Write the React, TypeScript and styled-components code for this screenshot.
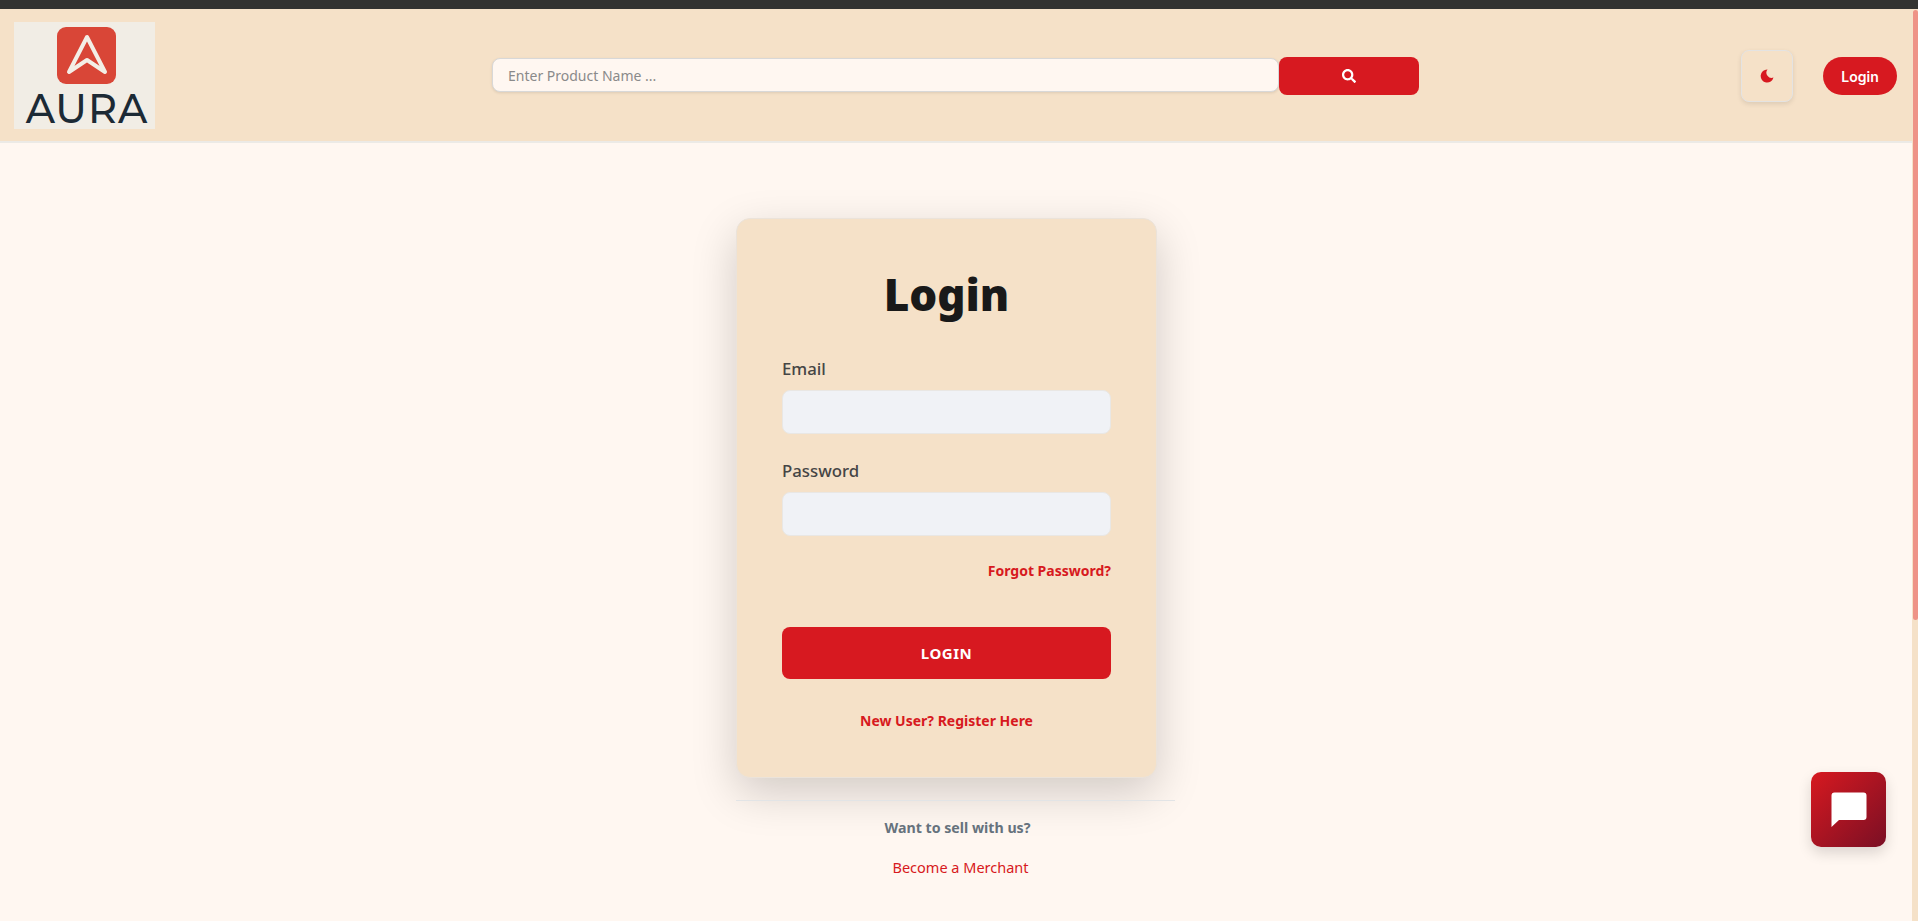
import React from "react";
import styled, { createGlobalStyle } from "styled-components";
import { FaSearch } from "react-icons/fa";

const UI_FONT = `"Noto Sans", "Open Sans", "Liberation Sans", sans-serif`;

const App = () => {
  return (
    <>
      <GlobalStyle />
      <StyledBrowserStrip />
      <StyledViewport>
        <StyledPage>
          <StyledHeader>
            <StyledLogo>
              <svg width="141" height="107" viewBox="0 0 141 107">
                <rect x="43" y="5" width="59" height="57" rx="9" fill="#d94637" />
                <path
                  d="M73 15 L55 50 L73 38 L91 50 Z"
                  fill="none"
                  stroke="#f3eee6"
                  strokeWidth="4"
                  strokeLinejoin="round"
                />
              </svg>
              <StyledLogoText>AURA</StyledLogoText>
            </StyledLogo>
            <StyledSearch>
              <StyledSearchInput placeholder="Enter Product Name ..." />
              <StyledSearchButton>
                <FaSearch size={14} />
              </StyledSearchButton>
            </StyledSearch>
            <StyledActions>
              <StyledThemeButton>
                <svg width="14" height="14" viewBox="0 0 14 14">
                  <path
                    d="M7.5 .5 A6.5 6.5 0 1 0 13.5 8.5 A5.2 5.2 0 0 1 7.5 .5 Z"
                    fill="currentColor"
                  />
                </svg>
              </StyledThemeButton>
              <StyledLoginPill>Login</StyledLoginPill>
            </StyledActions>
          </StyledHeader>

          <StyledMain>
            <StyledCard>
              <StyledTitle>Login</StyledTitle>
              <StyledField>
                <StyledLabel>Email</StyledLabel>
                <StyledInput type="email" />
              </StyledField>
              <StyledField>
                <StyledLabel>Password</StyledLabel>
                <StyledInput type="password" />
              </StyledField>
              <StyledForgot>Forgot Password?</StyledForgot>
              <StyledSubmit>LOGIN</StyledSubmit>
              <StyledRegister>New User? Register Here</StyledRegister>
            </StyledCard>
            <StyledMerchant>
              <StyledSellText>Want to sell with us?</StyledSellText>
              <StyledMerchantLink>Become a Merchant</StyledMerchantLink>
            </StyledMerchant>
          </StyledMain>

          <StyledChatButton>
            <svg width="36" height="36" viewBox="0 0 36 36">
              <path
                d="M3.5 .5 H32.5 A3 3 0 0 1 35.5 3.5 V25 A3 3 0 0 1 32.5 28 H8 L.5 35 V3.5 A3 3 0 0 1 3.5 .5 Z"
                fill="#fff"
              />
            </svg>
          </StyledChatButton>
        </StyledPage>
        <StyledScrollTrack>
          <StyledScrollThumb />
        </StyledScrollTrack>
      </StyledViewport>
    </>
  );
};

export default App;

const GlobalStyle = createGlobalStyle`
  html, body {
    margin: 0;
    height: 921px;
    overflow: hidden;
    background: #fff7f1;
    font-family: ${UI_FONT};
  }
  * { box-sizing: border-box; }
`;

const StyledBrowserStrip = styled.div`
  height: 9px;
  background: #333331;
`;

const StyledViewport = styled.div`
  display: flex;
  height: 912px;
`;

const StyledPage = styled.div`
  position: relative;
  flex: 1;
  display: flex;
  flex-direction: column;
  background: #fff7f1;
`;

const StyledScrollTrack = styled.div`
  width: 6px;
  background: #f5e1c8;
`;

const StyledScrollThumb = styled.div`
  width: 5px;
  height: 610px;
  margin: 1px 0 0 1px;
  background: #ee9387;
  border-radius: 3px;
`;

const StyledHeader = styled.header`
  height: 134px;
  padding: 13px 15px 0 14px;
  display: flex;
  background: #f5e1c8;
  border-bottom: 2px solid #eceae6;
`;

const StyledLogo = styled.div`
  position: relative;
  width: 141px;
  height: 107px;
  background: #f1ede5;
`;

const StyledLogoText = styled.span`
  position: absolute;
  left: 5px;
  right: 0;
  bottom: -5px;
  text-align: center;
  font-family: "Montserrat", "Lato", "Noto Sans", sans-serif;
  font-size: 40px;
  font-weight: 500;
  line-height: 50px;
  letter-spacing: 1px;
  color: #1c2a35;
`;

const StyledSearch = styled.div`
  display: flex;
  align-items: flex-start;
  width: 927px;
  height: 38px;
  margin: 35px 0 0 337px;
`;

const StyledSearchInput = styled.input`
  flex: 1;
  height: 34px;
  margin-top: 1px;
  padding: 0 15px;
  background: #fff7f1;
  border: 1px solid #d8d8d8;
  border-radius: 8px;
  box-shadow: 0 1px 3px rgba(0, 0, 0, 0.1);
  font-family: ${UI_FONT};
  font-size: 14px;
  outline: none;

  &::placeholder {
    color: #8a8a8a;
  }
`;

const StyledSearchButton = styled.button`
  width: 140px;
  height: 38px;
  display: flex;
  align-items: center;
  justify-content: center;
  padding: 0;
  color: #fff;
  background: #d71920;
  border: none;
  border-radius: 8px;
`;

const StyledActions = styled.div`
  display: flex;
  align-items: center;
  gap: 30px;
  height: 52px;
  margin: 28px 0 0 auto;
`;

const StyledThemeButton = styled.button`
  width: 52px;
  height: 52px;
  display: flex;
  align-items: center;
  justify-content: center;
  padding: 0;
  color: #d71920;
  background: #f5e1c8;
  border: 1px solid #e4e3e2;
  border-radius: 8px;
  box-shadow: 0 2px 5px rgba(0, 0, 0, 0.1);
`;

const StyledLoginPill = styled.button`
  width: 74px;
  height: 38px;
  padding: 0;
  color: #fff;
  background: #d71920;
  border: none;
  border-radius: 19px;
  font-family: "Inter", sans-serif;
  font-size: 14px;
  font-weight: 600;
`;

const StyledMain = styled.main`
  display: flex;
  flex-direction: column;
  padding: 75px 0 0 736px;
`;

const StyledCard = styled.section`
  display: flex;
  flex-direction: column;
  width: 421px;
  height: 560px;
  padding: 45px 45px 0;
  background: #f5e1c8;
  border: 1px solid #ebe3da;
  border-radius: 14px;
  box-shadow: 0 15px 45px rgba(0, 0, 0, 0.18);
`;

const StyledTitle = styled.h1`
  margin: 0 0 34px;
  text-align: center;
  font-size: 44px;
  font-weight: 900;
  line-height: 60px;
  color: #191919;
`;

const StyledField = styled.div`
  display: flex;
  flex-direction: column;
  margin-bottom: 26px;
`;

const StyledLabel = styled.label`
  margin: -1px 0 9px;
  font-size: 16.8px;
  font-weight: 500;
  line-height: 24px;
  color: #454545;
`;

const StyledInput = styled.input`
  height: 44px;
  background: #f0f2f6;
  border: 1px solid #e9e7e4;
  border-radius: 8px;
`;

const StyledForgot = styled.a`
  align-self: flex-end;
  margin: -1px 0 46px;
  font-size: 14px;
  font-weight: 700;
  line-height: 20px;
  color: #d71920;
`;

const StyledSubmit = styled.button`
  height: 52px;
  color: #fff;
  background: #d71920;
  border: none;
  border-radius: 8px;
  font-family: ${UI_FONT};
  font-size: 15px;
  font-weight: 700;
  letter-spacing: 0.5px;
`;

const StyledRegister = styled.a`
  margin-top: 32px;
  text-align: center;
  font-size: 14px;
  font-weight: 700;
  line-height: 20px;
  color: #d71920;
`;

const StyledMerchant = styled.div`
  display: flex;
  flex-direction: column;
  align-items: center;
  width: 439px;
  margin-top: 22px;
  padding-top: 16px;
  border-top: 1px solid #e2e4e6;
`;

const StyledSellText = styled.p`
  margin: 1px 0 19px 4px;
  font-size: 14.2px;
  font-weight: 700;
  line-height: 20px;
  color: #66727d;
`;

const StyledMerchantLink = styled.a`
  margin-left: 10px;
  font-size: 14.5px;
  line-height: 20px;
  color: #d71920;
`;

const StyledChatButton = styled.button`
  position: absolute;
  left: 1811px;
  top: 763px;
  width: 75px;
  height: 75px;
  display: flex;
  align-items: center;
  justify-content: center;
  padding: 0;
  background: linear-gradient(135deg, #d71920, #7a0f24);
  border: none;
  border-radius: 10px;
  box-shadow: 0 6px 14px rgba(0, 0, 0, 0.14);
`;
